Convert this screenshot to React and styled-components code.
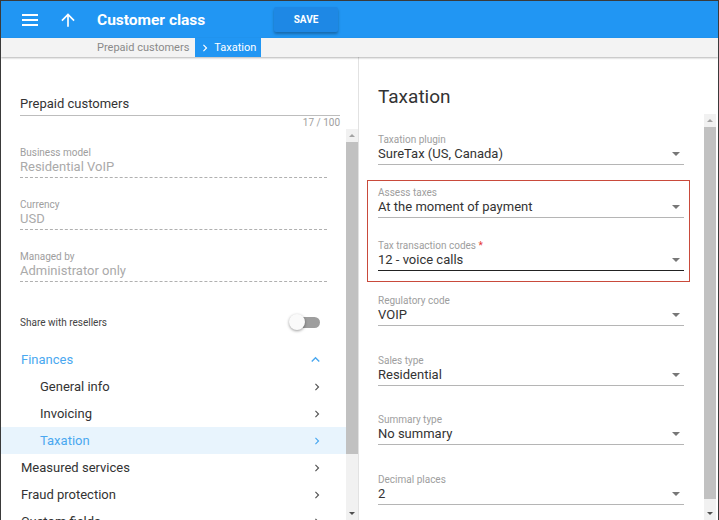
import React from 'react';
import styled, {createGlobalStyle} from 'styled-components';

const GlobalStyle = createGlobalStyle`
  html, body { margin: 0; padding: 0; background: #fff; }
  body { font-family: Roboto, "Noto Sans", "Liberation Sans", sans-serif; }
  * { box-sizing: border-box; }
`;

const Frame = styled.div`
  width: 719px;
  height: 520px;
  border: 1px solid #3a3a3a;
  border-bottom: none;
  display: flex;
  flex-direction: column;
  overflow: hidden;
  background: #fff;
`;

const Header = styled.header`
  height: 37px;
  background: #2196f3;
  display: flex;
  align-items: center;
  padding-left: 21px;
  flex-shrink: 0;
`;

const IconBtn = styled.div`
  display: flex;
  align-items: center;
  margin-right: ${p => p.$mr}px;
  color: #fff;
`;

const Title = styled.h1`
  margin: 0;
  width: 177px;
  font-size: 15.5px;
  font-weight: 700;
  color: #fff;
`;

const SaveButton = styled.button`
  width: 64px;
  height: 25px;
  border: none;
  border-radius: 2px;
  background: #1e88e5;
  color: #fff;
  font-family: inherit;
  font-size: 10px;
  font-weight: 700;
  box-shadow: 0 2px 3px rgba(0, 0, 0, 0.3);
  padding: 0;
`;

const Crumbs = styled.nav`
  height: 19px;
  background: #f3f3f3;
  display: flex;
  align-items: stretch;
  padding-left: 96px;
  box-shadow: 0 1px 2px rgba(0, 0, 0, 0.3);
  position: relative;
  z-index: 1;
  flex-shrink: 0;
`;

const Crumb = styled.div`
  display: flex;
  align-items: center;
  gap: 2px;
  font-size: 11px;
  padding: ${p => (p.$active ? '0 5px 0 3px' : '0 6px 0 0')};
  background: ${p => (p.$active ? '#2196f3' : 'transparent')};
  color: ${p => (p.$active ? '#fff' : '#8a8a8a')};
`;

const Main = styled.div`
  flex: 1;
  display: flex;
  min-height: 0;
`;

const Panel = styled.section`
  width: ${p => p.w}px;
  flex-shrink: 0;
  display: flex;
  flex-direction: column;
  border-right: ${p => (p.$divider ? '1px solid #e2e2e2' : 'none')};
  min-height: 0;
`;

const NameInput = styled.div`
  padding: 38px 18px 0 19px;
`;

const NameValue = styled.div`
  font-size: 13px;
  line-height: 18px;
  color: #333;
  padding-bottom: 2px;
  border-bottom: 1px solid #bdbdbd;
`;

const Counter = styled.div`
  text-align: right;
  font-size: 10px;
  line-height: 12px;
  margin-top: 1px;
  color: #9e9e9e;
`;

const Scroller = styled.div`
  flex: 1;
  display: flex;
  min-height: 0;
  margin-top: ${p => p.$top || 0}px;
  padding-right: ${p => p.$right || 0}px;
`;

const ScrollContent = styled.div`
  flex: 1;
  overflow: hidden;
  padding: ${p => p.$pad};
`;

const Track = styled.div`
  width: 12px;
  background: #f1f1f1;
  display: flex;
  flex-direction: column;
  align-items: center;
`;

const Arrow = styled.div`
  height: 13px;
  display: flex;
  align-items: center;
  justify-content: center;
  width: 100%;
  &::before {
    content: '';
    border-left: 3px solid transparent;
    border-right: 3px solid transparent;
    ${p => (p.$down ? 'border-top: 3px solid #505050;' : 'border-bottom: 3px solid #a3a3a3;')}
  }
`;

const Thumb = styled.div`
  width: 100%;
  height: ${p => p.h}px;
  background: #c1c1c1;
`;

const Spacer = styled.div`
  flex: 1;
`;

const ReadField = styled.div`
  margin-bottom: 19px;
`;

const Label = styled.div`
  font-size: 10px;
  line-height: 12px;
  padding-top: 2px;
  margin-bottom: -2px;
  color: #9e9e9e;
  span { color: #e53935; }
`;

const ReadValue = styled.div`
  font-size: 13px;
  line-height: 20px;
  color: #aaa;
  border-bottom: 1px dashed #b0b0b0;
`;

const ToggleRow = styled.div`
  display: flex;
  align-items: center;
  justify-content: space-between;
  height: 24px;
  margin-top: 28px;
  margin-bottom: 12px;
  font-size: 10px;
  color: #444;
  padding-right: 7px;
`;

const Toggle = styled.div`
  position: relative;
  width: 30px;
  height: 11px;
  border-radius: 6px;
  background: #9e9e9e;
  &::after {
    content: '';
    position: absolute;
    left: -1px;
    top: -3px;
    width: 16px;
    height: 16px;
    border-radius: 50%;
    background: #fafafa;
    box-shadow: 0 1px 3px rgba(0, 0, 0, 0.4);
  }
`;

const NavRow = styled.div`
  height: 27px;
  display: flex;
  align-items: center;
  justify-content: space-between;
  margin: 0 -19px;
  padding: 0 22px 0 ${p => (p.$sub ? 39 : 20)}px;
  font-size: 13px;
  color: ${p => (p.$blue ? '#4aa8f0' : '#333')};
  background: ${p => (p.$active ? '#e8f4fd' : 'transparent')};
`;

const Field = styled.div`
  margin-bottom: ${p => p.$mb || 0}px;
`;

const SelectValue = styled.div`
  display: flex;
  align-items: center;
  justify-content: space-between;
  font-size: 13px;
  line-height: 20px;
  color: #333;
  border-bottom: 1px solid ${p => (p.$focus ? '#222' : '#b5b5b5')};
  padding-right: 4px;
  &::after {
    content: '';
    border-left: 4px solid transparent;
    border-right: 4px solid transparent;
    border-top: 4px solid #777;
  }
`;

const Heading = styled.h2`
  margin: 0;
  padding: 28px 0 0 19px;
  font-size: 19px;
  line-height: 24px;
  font-weight: 400;
  color: #333;
`;

const Highlight = styled.div`
  border: 1px solid rgb(201, 74, 59);
  margin: 0 -6px 11px -11px;
  padding: 4px 5px 10px 10px;
`;

const Menu = () => (
  <svg width="16" height="12" viewBox="0 0 16 12">
    <rect y="0" width="16" height="2" fill="#fff" />
    <rect y="5" width="16" height="2" fill="#fff" />
    <rect y="10" width="16" height="2" fill="#fff" />
  </svg>
);

const ArrowUp = () => (
  <svg width="20" height="20" viewBox="0 0 24 24">
    <path d="M4 12l1.41 1.41L11 7.83V20h2V7.83l5.58 5.59L20 12l-8-8-8 8z" fill="#fff" />
  </svg>
);

const Chevron = ({up, color = '#555', size = 14}) => (
  <svg width={size} height={size} viewBox="0 0 24 24">
    <path
      d={up ? 'M7.41 15.41L12 10.83l4.59 4.58L18 14l-6-6-6 6z' : 'M8.59 16.59L13.17 12 8.59 7.41 10 6l6 6-6 6z'}
      fill={color}
    />
  </svg>
);

const readFields = [
  {label: 'Business model', value: 'Residential VoIP'},
  {label: 'Currency', value: 'USD'},
  {label: 'Managed by', value: 'Administrator only'},
];

const navItems = [
  {text: 'General info', sub: true},
  {text: 'Invoicing', sub: true},
  {text: 'Taxation', sub: true, active: true},
  {text: 'Measured services'},
  {text: 'Fraud protection'},
  {text: 'Custom fields'},
];

const App = () => (
  <>
    <GlobalStyle />
    <Frame>
      <Header>
        <IconBtn $mr={20}><Menu /></IconBtn>
        <IconBtn $mr={19}><ArrowUp /></IconBtn>
        <Title>Customer class</Title>
        <SaveButton>SAVE</SaveButton>
      </Header>
      <Crumbs>
        <Crumb>Prepaid customers</Crumb>
        <Crumb $active><Chevron color="#fff" size={14} />Taxation</Crumb>
      </Crumbs>
      <Main>
        <Panel w={358} $divider>
          <NameInput>
            <NameValue>Prepaid customers</NameValue>
            <Counter>17 / 100</Counter>
          </NameInput>
          <Scroller>
            <ScrollContent $pad="16px 19px 0 19px">
              {readFields.map(f => (
                <ReadField key={f.label}>
                  <Label>{f.label}</Label>
                  <ReadValue>{f.value}</ReadValue>
                </ReadField>
              ))}
              <ToggleRow>
                Share with resellers
                <Toggle />
              </ToggleRow>
              <NavRow $blue>
                Finances
                <Chevron up color="#4aa8f0" size={17} />
              </NavRow>
              {navItems.map(n => (
                <NavRow key={n.text} $sub={n.sub} $active={n.active} $blue={n.active}>
                  {n.text}
                  <Chevron color={n.active ? '#4aa8f0' : '#555'} />
                </NavRow>
              ))}
            </ScrollContent>
            <Track>
              <Arrow />
              <Thumb h={312} />
              <Spacer />
              <Arrow $down />
            </Track>
          </Scroller>
        </Panel>
        <Panel w={359}>
          <Heading>Taxation</Heading>
          <Scroller $top={5} $right={2}>
            <ScrollContent $pad="18px 20px 0 19px">
              <Field $mb={15}>
                <Label>Taxation plugin</Label>
                <SelectValue>SureTax (US, Canada)</SelectValue>
              </Field>
              <Highlight>
                <Field $mb={20}>
                  <Label>Assess taxes</Label>
                  <SelectValue>At the moment of payment</SelectValue>
                </Field>
                <Field>
                  <Label>Tax transaction codes <span>*</span></Label>
                  <SelectValue $focus>12 - voice calls</SelectValue>
                </Field>
              </Highlight>
              <Field $mb={27}>
                <Label>Regulatory code</Label>
                <SelectValue>VOIP</SelectValue>
              </Field>
              <Field $mb={26}>
                <Label>Sales type</Label>
                <SelectValue>Residential</SelectValue>
              </Field>
              <Field $mb={27}>
                <Label>Summary type</Label>
                <SelectValue>No summary</SelectValue>
              </Field>
              <Field>
                <Label>Decimal places</Label>
                <SelectValue>2</SelectValue>
              </Field>
            </ScrollContent>
            <Track>
              <Arrow />
              <Thumb h={372} />
              <Spacer />
              <Arrow $down />
            </Track>
          </Scroller>
        </Panel>
      </Main>
    </Frame>
  </>
);

export default App;
